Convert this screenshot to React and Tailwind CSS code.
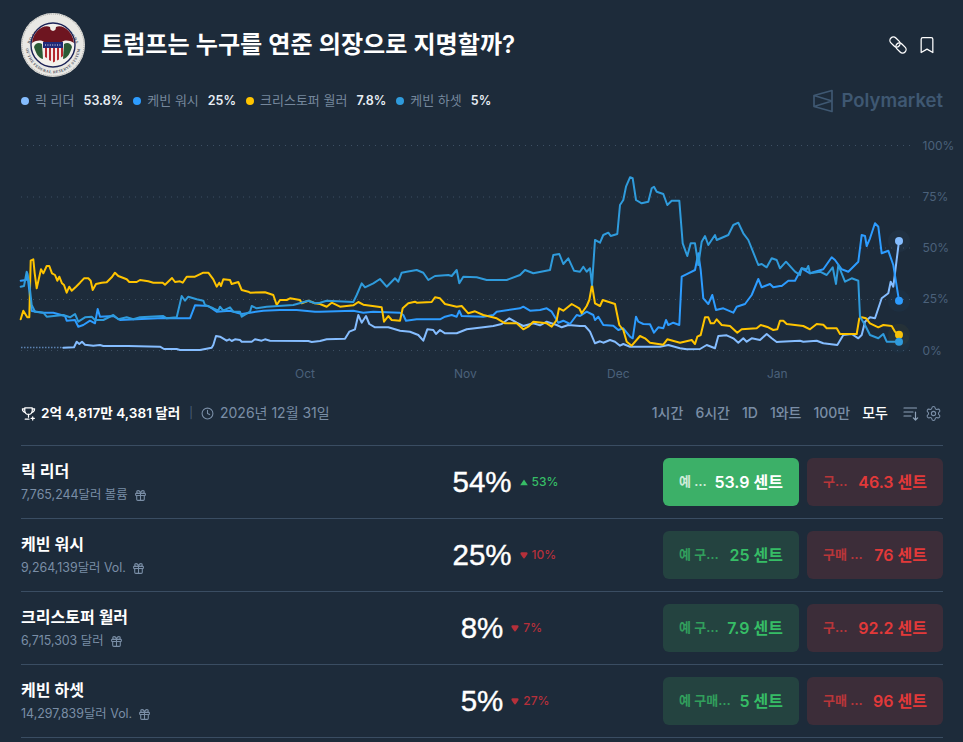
import React from 'react';
import { Bookmark, Clock, Gift, Settings } from 'lucide-react';

// chart points were read off zoomed crops, so each run keeps its crop origin
const run = (ox, oy, pts) => {
  const out = [];
  for (let i = 0; i < pts.length; i += 2) out.push(`${(ox + pts[i] / 3).toFixed(1)},${(oy + pts[i + 1] / 3).toFixed(1)}`);
  return out;
};

const yellow = [
  ...run(0, 240, [62,238,70,212,82,232,88,232,92,62,100,58,104,100,110,145,118,110,123,88,130,100,140,78,148,78,156,100,165,105,172,122,178,110,186,130,192,135,200,158,208,140,215,152,228,140,240,128,252,115,265,115,272,122,278,150,288,132,305,128,320,127,335,112,345,98,355,108,380,118,388,126,410,126,420,120,445,124,460,128,488,128,495,134,516,114,525,126,540,124,548,128,560,110,585,110,610,98,625,98,640,118,650,140,658,128,663,138,670,118,690,120,695,132,715,126,725,150,745,155,750,158,795,157,820,165,830,195,840,180,860,180,870,175,900,180,905,190,925,182,945,190]),
  ...run(320, 240, [0,192,20,200,35,188,60,200,100,196,115,186,130,194,185,202,192,245,205,228,215,240,240,242,248,205,265,190,285,185,290,188,335,186,345,172,360,175,375,192,410,200,425,198,445,220,465,214,490,225,530,235,555,250,590,250,610,268,625,260,640,245,680,250,695,260,710,240,717,205,730,212,755,192,778,205,785,220,800,198,808,180,816,135]),
  ...run(580, 170, [45,400,60,408,68,390,105,402,118,465,130,480,140,515,155,527,180,498,195,505,210,518,250,524,262,508,300,518,335,510,345,522,352,500,362,495,375,442,385,442,392,460,402,460,410,448,425,465,450,468,472,488,485,478,530,475,542,465,565,472,580,480,592,478]),
  ...run(760, 210, [60,332,70,332,80,342,130,348,150,358,170,342,190,344,200,355,230,355,240,372,290,372,298,325,305,322,318,325,330,340,355,352,370,345,395,348,405,365,417,374]),
];

const light = [
  ...run(0, 240, [190,323,222,322,230,305,238,312,246,305,255,314,280,317,300,315,310,318,385,318,480,320,492,327,530,327,540,330,600,330,635,323,640,315,648,288,660,290,680,302,688,298,695,303,705,298,720,300,725,305,755,305,765,298,785,302,795,298,810,302,925,303,935,306]),
  ...run(320, 240, [0,303,20,298,75,296,88,275,105,268,115,225,125,248,138,228,148,252,165,262,205,262,240,272,270,275,295,285,310,302,322,268,340,270,348,282,360,270,375,280,410,280,440,268,490,262,520,258,545,252,568,235,590,248,610,258,640,250,660,256,680,245,710,255,725,262,745,255]),
  ...run(580, 170, [0,468,15,468,30,485,45,520,60,514,70,518,90,510,105,515,120,527,130,522,150,530,240,530,265,525,300,535,320,538,360,537,380,525,405,535,415,498,440,496,460,505,475,518,490,505,500,515,515,505,540,510,560,492,575,505,590,516]),
  ...run(760, 210, [60,395,120,392,130,395,170,392,190,400,232,405,250,375,275,372,295,385,305,375,315,335,330,322,345,325,365,265,385,250,392,215,400,230,417,93]),
];

const blue = [
  ...run(0, 240, [62,122,78,120,82,100,90,170,95,213,130,218,160,218,195,228,200,242,225,240,235,260,250,255,270,242,285,250,293,207,300,230,340,228,360,240,490,234,530,235,570,235,585,196,625,198,650,215,690,212,725,222,750,218,790,212,840,210,890,210,945,215]),
  ...run(320, 240, [0,215,100,212,130,218,160,215,240,218,250,225,258,242,290,238,360,238,375,230,395,225,410,230,418,212,425,228,490,230,520,225,530,215,600,205,610,200,630,212,660,210,680,205,695,215,715,248,730,242,750,252,770,225]),
  ...run(580, 170, [0,438,20,425,40,435,45,450,55,440,70,465,100,467,115,480,130,475,150,500,158,505,168,440,175,455,190,462,210,463,222,488,235,472,250,475,258,450,265,465,280,458,298,465,305,320,325,310,345,300,355,250,362,300,370,385,385,402,397,375,408,420,430,415,460,428,470,410,495,402,515,375,535,327,545,352,570,342,580,352]),
  ...run(760, 210, [60,228,65,228,85,212,105,212,125,175,150,190,175,182,190,178,215,142,225,150,245,178,265,185,295,155,305,75,315,78,320,108,330,85,345,40,355,50,365,130,385,122,400,165,417,272]),
];

const teal = [
  ...run(0, 240, [62,140,72,138,80,95,88,130,95,195,105,215,130,218,140,230,190,225,210,232,225,222,235,245,255,232,275,230,285,240,310,240,340,225,355,238,380,232,400,238,420,232,490,228,500,235,530,232,545,168,555,182,565,170,590,178,610,182,615,195,640,205,655,212,660,200,670,212,690,202,700,215,720,215,725,230,750,215,755,198,770,205,800,200,880,195,925,182,945,190]),
  ...run(320, 240, [0,188,20,182,100,186,110,165,125,130,135,142,160,130,180,117,200,140,225,115,235,125,245,98,260,95,290,90,310,98,325,120,345,108,385,105,395,108,410,90,418,130,430,110,470,112,500,120,560,120,600,105,615,90,640,100,690,90,700,45,718,42,730,72,745,55,762,92,780,95,790,80,800,95,810,85,816,135]),
  ...run(580, 170, [45,210,60,218,70,195,85,188,92,198,112,192,120,105,130,90,138,50,150,22,158,25,168,90,185,100,205,95,215,55,222,50,230,65,250,72,262,105,275,92,298,92,308,220,322,258,332,220,345,220,355,285,365,215,375,198,385,225,405,195,410,210,445,195,460,165,475,158,490,190,505,210,535,285,545,282,560,292,575,265,590,270]),
  ...run(760, 210, [60,175,78,155,105,185,120,195,125,175,140,178,145,168,150,190,180,185,200,195,218,172,228,222,235,165,255,215,275,205,295,212,300,320,315,345,330,375,355,385,370,372,380,395,417,395]),
];

const series = [
  { pts: light, color: '#85bdff', y: 241 },
  { pts: blue, color: '#2d9cff', y: 300.7 },
  { pts: yellow, color: '#ffc400', y: 334.7 },
  { pts: teal, color: '#2f9bdc', y: 341.7 },
];

const legend = [
  { name: '릭 리더', pct: '53.8%', color: 'bg-[#85bdff]' },
  { name: '케빈 워시', pct: '25%', color: 'bg-[#2d9cff]' },
  { name: '크리스토퍼 월러', pct: '7.8%', color: 'bg-[#ffc400]' },
  { name: '케빈 하셋', pct: '5%', color: 'bg-[#2f9bdc]' },
];

const rows = [
  { name: '릭 리더', vol: '7,765,244달러 볼륨', pct: '54%', delta: '53%', up: true, yes: '53.9 센트', no: '46.3 센트', active: true },
  { name: '케빈 워시', vol: '9,264,139달러 Vol.', pct: '25%', delta: '10%', yes: '25 센트', no: '76 센트' },
  { name: '크리스토퍼 월러', vol: '6,715,303 달러', pct: '8%', delta: '7%', yes: '7.9 센트', no: '92.2 센트' },
  { name: '케빈 하셋', vol: '14,297,839달러 Vol.', pct: '5%', delta: '27%', yes: '5 센트', no: '96 센트' },
];

const ranges = ['1시간', '6시간', '1D', '1와트', '100만'];

const Seal = () => (
  <svg viewBox="0 0 64 64" className="w-16 h-16 shrink-0">
    <defs>
      <path id="sealTop" d="M8 35 A24.300 24.300 0 0 1 56 35" />
      <path id="sealBottom" d="M4.800 33 A27.200 27.200 0 0 0 59.200 33" />
    </defs>
    <circle cx="32" cy="32" r="32" fill="#e9e8e4" />
    <circle cx="32" cy="32" r="31" fill="none" stroke="#9c9c98" strokeWidth="1" strokeDasharray="1 1" />
    <text fontSize="4.300" fontWeight="700" fill="#4a4e5c" fontFamily="Liberation Serif, serif" letterSpacing="0.5">
      <textPath href="#sealTop" startOffset="50%" textAnchor="middle">BOARD OF GOVERNORS</textPath>
    </text>
    <text fontSize="3.900" fontWeight="700" fill="#4a4e5c" fontFamily="Liberation Serif, serif" letterSpacing="0.35">
      <textPath href="#sealBottom" startOffset="50%" textAnchor="middle">OF THE FEDERAL RESERVE SYSTEM</textPath>
    </text>
    <circle cx="32" cy="32" r="22" fill="#f3f1ec" stroke="#1d2458" strokeWidth="1.400" />
    <path d="M11 30 C12 19 22 11 29 14 L32 18 L35 14 C42 11 52 19 53 30 C48 27 44 27 41 29 L23 29 C20 27 16 27 11 30 Z" fill="#6e1520" />
    <circle cx="32" cy="15" r="2.800" fill="#f1efe9" />
    <path d="M13 34 C14 30 18 29 21 31 L22 46 C17 45 15 40 13 34 Z" fill="#2a5a35" />
    <path d="M51 34 C50 30 46 29 43 31 L42 46 C47 45 49 40 51 34 Z" fill="#2a5a35" />
    <path d="M22 29 H42 V35 H22 Z" fill="#1f2a78" />
    <path d="M22 35 H42 V41 C42 45 36 47.500 32 49.500 C28 47.500 22 45 22 41 Z" fill="#f5ecea" />
    <path d="M24 35 H26 V45 L24 44 Z M28 35 H30 V48 L28 47 Z M32 35 H34 V48.500 L32 49.500 Z M36 35 H38 V46.500 L36 47.500 Z M40 35 H42 V43 L40 44.500 Z" fill="#b3282f" />
    <path d="M24 32 H40" stroke="#e8e8f0" strokeWidth="1" strokeDasharray="1 1.400" />
  </svg>
);

const LinkIcon = () => (
  <svg viewBox="0 0 18 18" className="w-[18px] h-[18px]" fill="none" stroke="white" strokeWidth="1.300">
    <rect x="0.250" y="2.500" width="11.500" height="7" rx="3.500" transform="rotate(45 6 6)" />
    <rect x="6.250" y="8.500" width="11.500" height="7" rx="3.500" transform="rotate(45 12 12)" />
  </svg>
);

const PolyLogo = () => (
  <svg viewBox="0 0 20 24" className="w-5 h-6" fill="none" stroke="#3f5872" strokeWidth="1.700" strokeLinejoin="round">
    <path d="M19 1.500 V22.500 L1 17.500 V6.500 Z M1 6.500 L19 12 L1 17.500" />
  </svg>
);

const TrophyIcon = () => (
  <svg viewBox="0 0 16 16" className="w-[15px] h-[15px] shrink-0" fill="none" stroke="white" strokeWidth="1.300" strokeLinecap="round" strokeLinejoin="round">
    <path d="M4 2 H12 V5 C12 7.500 10 9 8 9 C6 9 4 7.500 4 5 Z" />
    <path d="M4 3 H1.500 C1.500 5.500 2.500 6.500 4.500 6.800 M12 3 H14.500 C14.500 5.500 13.500 6.500 11.500 6.800" />
    <path d="M8 9 V12 M4.500 14 H8.500 M12.500 11.500 V15 M10.800 13.200 H14.200" />
  </svg>
);

const SortIcon = () => (
  <svg viewBox="0 0 16 16" className="w-4 h-4" fill="none" stroke="#8ea2b8" strokeWidth="1.200" strokeLinecap="round" strokeLinejoin="round">
    <path d="M1 3 H13.500 M1 7 H10 M1 11 H8 M12.500 7 V15 M10.300 12.800 L12.500 15 L14.700 12.800" />
  </svg>
);

const DownMark = () => (
  <svg viewBox="0 0 8 7" className="w-2 h-[7px]" fill="#b5303a">
    <path d="M0.400 1.500 Q0.400 0.300 1.700 0.300 H6.300 Q7.600 0.300 7.600 1.500 Q7.600 2.600 4 6.800 Q0.400 2.600 0.400 1.500 Z" />
  </svg>
);

const UpMark = () => (
  <svg viewBox="0 0 8 7" className="w-2 h-[7px]" fill="#36bd66">
    <path d="M4 0.500 L7.800 6.200 H0.200 Z" />
  </svg>
);

const Chart = () => (
  <svg viewBox="0 130 963 255" className="block w-[963px] h-[255px]">
    {[145.5, 197, 248, 299.5, 350.5].map((y) => (
      <line key={y} x1="21" x2="913" y1={y} y2={y} stroke="#3d4f63" strokeWidth="1" strokeDasharray="1 5" />
    ))}
    {[['100%', 149.5], ['75%', 200.5], ['50%', 252], ['25%', 303], ['0%', 354.5]].map(([t, y]) => (
      <text key={t} x="922.500" y={y} fontSize="12" fill="#4b617a" fontFamily="Inter, sans-serif">{t}</text>
    ))}
    {[['Oct', 295], ['Nov', 454], ['Dec', 607], ['Jan', 767]].map(([t, x]) => (
      <text key={t} x={x} y="377.500" fontSize="12" fill="#4b617a" fontFamily="Inter, sans-serif">{t}</text>
    ))}
    <line x1="21" x2="63" y1="347.500" y2="347.500" stroke="#85bdff" strokeWidth="1.600" strokeDasharray="1.500 1.500" opacity="0.6" />
    {series.map((s) => (
      <polyline key={s.color} points={s.pts.join(' ')} fill="none" stroke={s.color} strokeWidth="2" strokeLinejoin="round" strokeLinecap="round" />
    ))}
    {series.map((s) => (
      <g key={s.color}>
        <circle cx="899" cy={s.y} r="11" fill={s.color} opacity="0.04" />
        <circle cx="899" cy={s.y} r="4" fill={s.color} />
      </g>
    ))}
  </svg>
);

const TradeButton = ({ label, price, kind, active }) => {
  const tone = active
    ? 'bg-[#3cb068] text-white'
    : kind === 'yes'
      ? 'bg-[#244340] text-[#36bd66]'
      : 'bg-[#3c2d39] text-[#e23939]';
  return (
    <button className={`flex items-center gap-1.5 w-[136px] h-12 px-4 rounded-md ${tone}`}>
      <span className="flex-1 min-w-0 truncate text-left text-[13px] font-semibold opacity-75">{label}</span>
      <span className="shrink-0 text-base font-semibold">{price}</span>
    </button>
  );
};

export default function App() {
  return (
    <div className="w-[963px] h-[742px] overflow-hidden bg-[#1d2b3a] text-white font-['Inter','Noto_Sans_CJK_KR',sans-serif]">
      <header className="flex items-center gap-4 pl-[21px] pr-[26px] pt-[13px]">
        <Seal />
        <h1 className="flex-1 text-[24.1px] font-semibold leading-8">트럼프는 누구를 연준 의장으로 지명할까?</h1>
        <div className="flex items-center gap-[10px]">
          <LinkIcon />
          <Bookmark size={20} strokeWidth={1.5} />
        </div>
      </header>

      <div className="flex items-center justify-between pl-[21px] pr-5 mt-[14px] h-5">
        <div className="flex items-center gap-[10px] text-[13px]">
          {legend.map((l) => (
            <div key={l.name} className="flex items-center">
              <span className={`w-2 h-2 rounded-full mr-[6px] ${l.color}`} />
              <span className="text-[#75879c] mr-[9px]">{l.name}</span>
              <span className="text-[12.5px] font-semibold text-[#e8eef5]">{l.pct}</span>
            </div>
          ))}
        </div>
        <div className="flex items-center gap-[9px]">
          <PolyLogo />
          <span className="text-[18.5px] font-semibold text-[#3f5872]">Polymarket</span>
        </div>
      </div>

      <div className="mt-[19px]">
        <Chart />
      </div>

      <div className="flex items-center justify-between pl-[21px] pr-[21px] mt-[18px] h-5">
        <div className="flex items-center">
          <TrophyIcon />
          <span className="ml-[5px] text-[13.6px] font-semibold">2억 4,817만 4,381 달러</span>
          <span className="ml-[9px] mr-2 text-[11px] text-[#4b617a]">|</span>
          <Clock size={13} className="text-[#7a8ea6]" />
          <span className="ml-[6px] text-sm text-[#7a8ea6]">2026년 12월 31일</span>
        </div>
        <div className="flex items-center text-sm font-medium text-[#7a8ea6]">
          <div className="flex items-center gap-3">
            {ranges.map((r) => <span key={r}>{r}</span>)}
            <span className="text-white">모두</span>
          </div>
          <div className="flex items-center gap-[6px] ml-[15px]">
            <SortIcon />
            <Settings size={17} strokeWidth={1.5} />
          </div>
        </div>
      </div>

      <div className="mx-[21px] mt-[22px] mr-5 border-t border-[#3a4d62]">
        {rows.map((r) => (
          <div key={r.name} className="grid grid-cols-[1fr_auto_1fr] items-center h-[73px] border-b border-[#3a4d62]">
            <div>
              <div className="text-base font-semibold leading-5">{r.name}</div>
              <div className="flex items-center gap-[6px] mt-[6px] text-[12.4px] leading-4 text-[#7a8ea6]">
                <span>{r.vol}</span>
                <Gift size={13} />
              </div>
            </div>
            <div className="text-[29.5px] leading-9 text-center font-['Liberation_Sans',sans-serif] [-webkit-text-stroke:0.4px_white]">{r.pct}</div>
            <div className="flex items-center justify-between pl-[8px]">
              <div className={`flex items-center gap-1 text-xs font-medium ${r.up ? 'text-[#36bd66]' : 'text-[#b5303a]'}`}>
                {r.up ? <UpMark /> : <DownMark />}
                <span>{r.delta}</span>
              </div>
              <div className="flex gap-2">
                <TradeButton label="예 구매하기" price={r.yes} kind="yes" active={r.active} />
                <TradeButton label="구매 아니오" price={r.no} kind="no" />
              </div>
            </div>
          </div>
        ))}
      </div>
    </div>
  );
}
